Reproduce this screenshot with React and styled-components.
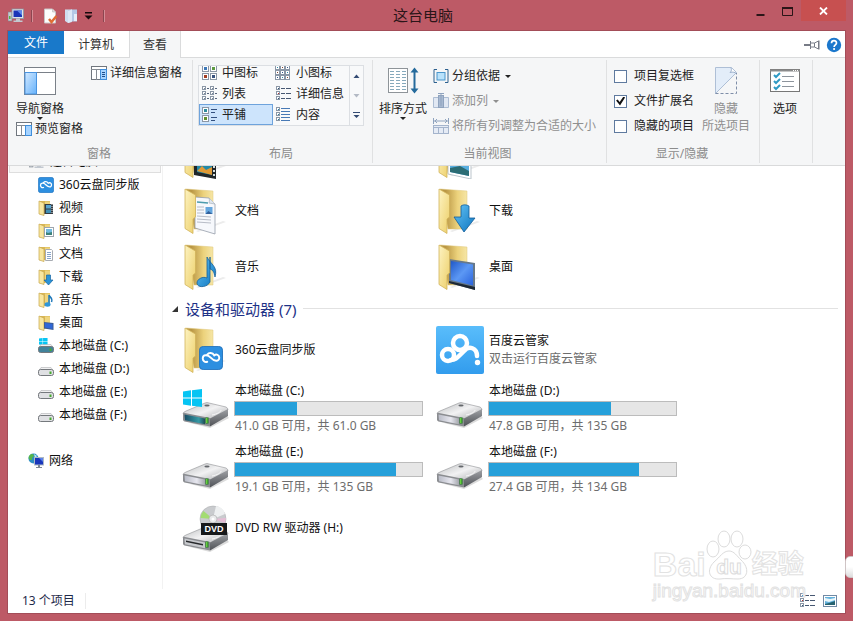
import React from "react";
import styled, { createGlobalStyle, css } from "styled-components";

const Global = createGlobalStyle`
  * { box-sizing: border-box; }
  body { margin: 0; background: #bd5a66; }
  body, button, input {
    font-family: "Noto Sans", "Noto Sans CJK SC", sans-serif;
    font-size: 12px;
    line-height: 16px;
    color: #111;
  }
  button { background: none; border: 0; padding: 0; }
  ul { list-style: none; margin: 0; padding: 0; }
  svg { display: block; flex: none; }
`;

/* ---------- window frame ---------- */

const Frame = styled.div`
  position: relative;
  display: flex;
  flex-direction: column;
  min-height: 100vh;
  padding: 0 8px 8px;
  background: #bd5a66;
  overflow: hidden;
`;

const TitleBar = styled.header`
  display: grid;
  grid-template-columns: 1fr auto 1fr;
  height: 31px;
  margin-right: -1px;
  margin-left: -8px;
`;

const QuickAccess = styled.div`
  display: flex;
  align-items: center;
  padding-left: 8px;
`;

const QuickButton = styled.button`
  display: flex;
  justify-content: center;
  width: ${(p) => p.$w || 21}px;
`;

const QuickLine = styled.span`
  width: 1px;
  height: 12px;
  margin: 0 7px;
  background: #8c4650;
  box-shadow: 1px 0 #d58d95;
`;

const Title = styled.h1`
  margin: 0;
  font-size: 15px;
  font-weight: 400;
  line-height: 31px;
  color: #2b1518;
`;

const WindowButtons = styled.div`
  display: flex;
  justify-content: flex-end;
  align-items: flex-start;
`;

const WindowButton = styled.button`
  display: flex;
  align-items: center;
  justify-content: center;
  width: ${(p) => (p.$close ? 45 : 27)}px;
  height: ${(p) => (p.$close ? 21 : 23)}px;
  background: ${(p) => (p.$close ? "#c75050" : "transparent")};
`;

const Client = styled.div`
  flex: 1;
  display: flex;
  flex-direction: column;
  background: #fff;
  box-shadow: 0 0 0 1px #a34d58;
`;

const EdgeHandle = styled.div`
  position: absolute;
  right: -8px;
  top: 556px;
  width: 16px;
  height: 22px;
  border-radius: 5px;
  background: linear-gradient(#fff 50%, #ddd);
  border: 1px solid #cfc4c5;
`;

/* ---------- tabs ---------- */

const TabBar = styled.div`
  display: flex;
  height: 27px;
  box-shadow: inset 0 -1px #dadbdc;
`;

const Tab = styled.button`
  padding: 0 15px 0 14px;
  height: 27px;
  color: #333;
  ${(p) => p.$file && css`
    height: 23px;
    padding: 0 16px;
    background: #1979ca;
    color: #fff;
  `}
  ${(p) => p.$active && css`
    background: #f5f6f7;
    border: 1px solid #dadbdc;
    border-width: 0 1px;
    padding: 0 13px;
  `}
`;

const TabTools = styled.div`
  display: flex;
  align-items: center;
  gap: 6px;
  margin-left: auto;
  padding-right: 3px;
`;

/* ---------- ribbon ---------- */

const Ribbon = styled.div`
  display: flex;
  height: 108px;
  background: #f5f6f7;
  border-bottom: 1px solid #d9dadb;
  padding: 2px 0;
`;

const Group = styled.section`
  display: flex;
  flex-direction: column;
  justify-content: space-between;
  flex: none;
  padding: 5px ${(p) => p.$right || 9}px 1px ${(p) => p.$left || 8}px;
  border-right: 1px solid #e0e1e2;
`;

const GroupBody = styled.div`
  display: flex;
  align-items: flex-start;
  gap: ${(p) => p.$gap || 0}px;
`;

const GroupName = styled.div`
  text-align: center;
  color: #8c8c8c;
`;

const Stack = styled.div`
  display: flex;
  flex-direction: column;
  align-items: flex-start;
  gap: ${(p) => p.$gap || 0}px;
  padding-top: ${(p) => p.$top || 0}px;
`;

const Command = styled.button`
  display: flex;
  align-items: center;
  gap: 3px;
  white-space: nowrap;
  color: ${(p) => (p.disabled ? "#8f8f8f" : "#222")};
`;

const BigCommand = styled.button`
  display: flex;
  flex-direction: column;
  align-items: center;
  min-width: ${(p) => p.$min || 48}px;
  padding-top: 1px;
  color: ${(p) => (p.disabled ? "#8f8f8f" : "#222")};
  white-space: nowrap;
  & > svg:first-child { margin-bottom: 5px; }
  & > span + span { padding-top: 1px; }
`;

const Caret = styled.i`
  width: 0;
  height: 0;
  margin-left: ${(p) => (p.$inline ? 2 : 0)}px;
  border: 3px solid transparent;
  border-top-color: currentColor;
  border-bottom-width: 0;
`;

const Gallery = styled.div`
  display: flex;
  height: 61px;
  border: 1px solid #dcdfe3;
  background: #f8f9fa;
`;

const GalleryGrid = styled.div`
  display: grid;
  grid-template-columns: 74px 76px;
  grid-auto-rows: 21px;
  align-content: end;
  overflow: hidden;
`;

const GalleryItem = styled.button`
  display: flex;
  align-items: center;
  gap: 5px;
  padding-left: 2px;
  white-space: nowrap;
  color: #222;
  ${(p) => p.$on && css`
    background: #cde4fc;
    box-shadow: inset 0 0 0 1px #6ea3dc;
  `}
`;

const GalleryScroll = styled.div`
  display: grid;
  grid-template-rows: repeat(3, 1fr);
  width: 14px;
  border-left: 1px solid #dcdfe3;
  button { display: grid; place-items: center; }
`;

const CheckLabel = styled.label`
  display: flex;
  align-items: center;
  gap: 7px;
  color: #222;
`;

const CheckBox = styled.input`
  appearance: none;
  display: grid;
  place-items: center;
  width: 13px;
  height: 13px;
  margin: 0;
  background: #fff;
  border: 1px solid #5f7a9f;
  &:checked::after {
    content: "";
    width: 9px;
    height: 9px;
    background: #111;
    clip-path: polygon(0 45%, 18% 32%, 40% 60%, 82% 0, 100% 12%, 44% 100%);
  }
`;

/* ---------- body ---------- */

const Body = styled.div`
  flex: 1;
  display: flex;
  overflow: hidden;
`;

const Sidebar = styled.nav`
  flex: none;
  width: 155px;
  border-right: 1px solid #f2f2f2;
  & > ul { margin-top: -16px; }
  & > ul + ul { margin-top: 23px; }
`;

const SideLink = styled.a`
  display: flex;
  align-items: center;
  gap: 5px;
  height: 23px;
  margin: 0 1px;
  padding-left: ${(p) => (p.$root ? 19 : 29)}px;
  color: #111;
  text-decoration: none;
  ${(p) => p.$selected && css`
    background: #f7f7f7;
    border: 1px solid #dedede;
  `}
`;

const Content = styled.main`
  flex: 1;
  padding: 0 7px 0 9px;
`;

const TileGrid = styled.ul`
  display: grid;
  grid-template-columns: repeat(auto-fill, 254px);
  padding-left: 10px;
  margin-top: ${(p) => (p.$scrolled ? -39 : 0)}px;
`;

const Tile = styled.li`
  display: flex;
  align-items: center;
  gap: 4px;
  height: ${(p) => (p.$drive ? 61 : 56)}px;
  padding-right: 13px;
`;

const TileText = styled.div`
  flex: 1;
  display: flex;
  flex-direction: column;
  gap: 2px;
`;

const TileName = styled.span`
  padding-left: 1px;
`;

const TileNote = styled.span`
  padding-left: 1px;
  color: #6d6d6d;
`;

const Meter = styled.div`
  height: 15px;
  border: 1px solid #bcbcbc;
  background: #e6e6e6;
`;

const MeterFill = styled.div`
  height: 100%;
  background: #26a0da;
`;

const SectionHead = styled.h2`
  display: flex;
  align-items: center;
  gap: 7px;
  height: 27px;
  margin: 0;
  font-size: 15px;
  line-height: 20px;
  font-weight: 400;
  color: #1e3287;
  &::after {
    content: "";
    flex: 1;
    height: 1px;
    background: #e2e2e2;
  }
`;

const StatusBar = styled.footer`
  display: flex;
  align-items: center;
  gap: 7px;
  height: 24px;
  padding: 0 7px 0 14px;
  color: #1e2a4a;
`;

const StatusCount = styled.span`
  padding-right: 10px;
  margin-right: auto;
  border-right: 1px solid #ececec;
`;

/* ---------- watermark ---------- */

const Watermark = styled.div`
  position: absolute;
  right: 47px;
  bottom: 19px;
  color: #fff;
  -webkit-text-stroke: 1px #e2e2e2;
  font-family: "Liberation Sans", "Noto Sans CJK SC", sans-serif;
`;

const MarkRow = styled.div`
  display: flex;
  align-items: flex-end;
  font-size: 34px;
  line-height: 32px;
  font-weight: 700;
`;

const MarkCjk = styled.span`
  font-size: 26px;
`;

const MarkUrl = styled.div`
  font-size: 19px;
  line-height: 22px;
`;

/* ---------- icons ---------- */

const Svg = ({ w = 16, h = w, children }) => (
  <svg width={w} height={h} viewBox={`0 0 ${w} ${h}`} aria-hidden="true">{children}</svg>
);

const PcIcon = () => (
  <Svg>
    <rect x="0" y="4" width="4" height="9" fill="#c8ccd2" stroke="#7b828c" strokeWidth=".6" />
    <rect x="1" y="8" width="1.500" height="3" fill="#59b443" />
    <rect x="4" y="1" width="11.500" height="9.500" fill="#dfe4ea" stroke="#8b93a0" strokeWidth=".8" />
    <rect x="5.500" y="2.500" width="8.500" height="6.500" fill="#1a35b8" />
    <path d="M9 2.500h5v5z" fill="#5c86ea" />
    <path d="M8 10.500h4v2h2.500v1.500h-9v-1.500H8z" fill="#c2c8d0" />
  </Svg>
);

const PropertiesIcon = () => (
  <Svg>
    <path d="M2.500 1h8l3 3v11h-11z" fill="#fdfdfd" stroke="#c9c4c6" />
    <path d="M10.500 1v3h3" fill="#ddd" stroke="#bbb" strokeWidth=".6" />
    <path d="M7 11l2.500 3 5-6" fill="none" stroke="#df6d35" strokeWidth="2.500" />
  </Svg>
);

const NewFolderIcon = () => (
  <Svg>
    <path d="M2 1.500h7V14l-4 1-3-2z" fill="#cfdef0" />
    <path d="M5 2.500l4-1h5v12H5z" fill="#b4c9e6" />
    <path d="M5 3v12l4-1.500V1.500z" fill="#dde9f7" />
    <rect x="11" y="6" width="3" height="7" fill="#e6eef8" />
  </Svg>
);

const PaneIcon = ({ side }) => (
  <Svg>
    <rect x=".5" y="1.500" width="15" height="13" fill="#fff" stroke="#70767e" />
    <path d="M0 4.500h16M5.500 4.500V15" stroke="#858b93" />
    <rect x="9.500" y="4.500" width="6" height="10" fill="#a6d3ff" stroke="#3f8edb" />
    {side === "details" && <path d="M11 7.500h3M11 9.500h3M11 11.500h3" stroke="#1f4f8c" />}
  </Svg>
);

const NavPaneIcon = () => (
  <Svg w={32} h={30}>
    <defs>
      <linearGradient id="pane" x2="1" y2="1">
        <stop stopColor="#d3e9ff" /><stop offset="1" stopColor="#66b2fb" />
      </linearGradient>
    </defs>
    <rect x=".5" y="1.500" width="31" height="27" fill="#fff" stroke="#7a8088" />
    <path d="M1 6.500h30" stroke="#7a8088" />
    <rect x="1" y="6.500" width="11.500" height="21.500" fill="url(#pane)" stroke="#4a94e0" />
  </Svg>
);

const cell = (x, y, s, c) => (
  <g key={`${x}-${y}`}>
    <rect x={x + 0.5} y={y + 0.5} width={s} height={s} fill="#fff" stroke="#8b97a6" />
    <rect x={x + 2} y={y + 2} width={Math.max(1, s - 3)} height={Math.max(1, s - 3)} fill={c} />
  </g>
);

const ViewIcon = ({ kind }) => (
  <Svg>
    {kind === "medium" && [cell(1, 0, 6, "#3d78b8"), cell(9, 0, 6, "#5d9a42"), cell(1, 8, 6, "#a33d22"), cell(9, 8, 6, "#38527e")]}
    {kind === "small" && [0, 5, 10].flatMap((x, i) => [0, 5, 10].map((y, j) => cell(x, y, 4, ["#2f8aa8", "#8a4b35", "#345890"][(i + j) % 3])))}
    {kind === "list" && [0, 5, 10].flatMap((y) => [cell(1, y, 3, "#789"), cell(9, y, 3, "#789")])}
    {kind === "list" && <path d="M6 2.500h2M6 7.500h2M6 12.500h2M14 2.500h2M14 7.500h2M14 12.500h2" stroke="#56657c" />}
    {kind === "details" && [0, 5, 10].map((y) => cell(1, y, 3, y === 5 ? "#b33" : "#357"))}
    {kind === "details" && <path d="M6 2.500h4M11 2.500h5M6 7.500h4M11 7.500h5M6 12.500h4M11 12.500h5" stroke="#475872" />}
    {kind === "tiles" && [cell(1, 0, 6, "#2d8c9e"), cell(1, 8, 6, "#5f8f2f")]}
    {kind === "tiles" && <path d="M10 2.500h6M10 5.500h4M10 10.500h6M10 13.500h4" stroke="#33507f" />}
    {kind === "content" && [0, 5, 10].map((y) => cell(1, y, 3, "#2d7f9e"))}
    {kind === "content" && <path d="M6 1.500h9M6 4.500h9M6 7.500h9M6 10.500h9M6 13.500h9" stroke="#4779b5" />}
  </Svg>
);

const ArrowIcon = ({ kind }) => (
  <Svg w={7} h={8}>
    {kind === "up" && <path d="M.5 6l3-3.500 3 3.500z" fill="#344b73" />}
    {kind === "down" && <path d="M.5 3l3 3.500 3-3.500z" fill="#b4bac5" />}
    {kind === "more" && <path d="M0 1h7v1H0zM.5 4l3 3 3-3z" fill="#344b73" />}
  </Svg>
);

const SortIcon = () => (
  <Svg w={32} h={30}>
    <rect x="1.500" y="2.500" width="19" height="24" fill="#fff" stroke="#8e9499" />
    {[6, 9, 12, 15, 18, 21, 24].map((y) => (
      <path key={y} d={`M3 ${y - 0.5}h16`} stroke="#86a9bc" strokeDasharray="4 2" />
    ))}
    <path d="M27.500 4v21" stroke="#246a9c" strokeWidth="2" />
    <path d="M23.500 6.500l4-5 4 5zM23.500 22.500l4 5 4-5z" fill="#246a9c" />
  </Svg>
);

const GroupByIcon = () => (
  <Svg>
    <path d="M4 1.500H1v13h3M12 1.500h3v13h-3" fill="none" stroke="#2c608e" />
    <rect x="4" y="4.500" width="8" height="7.500" fill="#b9e2fb" stroke="#4b96cb" />
  </Svg>
);

const AddColumnIcon = () => (
  <Svg>
    <path d="M.5 4.500h5v10h-5zM10.500 4.500h5v10h-5z" fill="#e1e8f3" stroke="#adbdd3" />
    <rect x="5.500" y="2.500" width="5" height="12" fill="#a7b8d0" stroke="#8fa3be" />
    <path d="M5 .5h6M8 0v13" stroke="#8fa3be" />
  </Svg>
);

const FitColumnsIcon = () => (
  <Svg>
    <path d="M.5 0v6M15.500 0v6M1 3h14M4 1L2 3l2 2M12 1l2 2-2 2" fill="none" stroke="#8fa3be" />
    <rect x=".5" y="7.500" width="15" height="8" fill="#e5ebf5" stroke="#a4b4cc" />
    <path d="M0 9.500h16M5.500 9v7M10.500 9v7" stroke="#a4b4cc" />
  </Svg>
);

const HideIcon = () => (
  <Svg w={24} h={30}>
    <path d="M1.500 1.500h16l5 5-21 21z" fill="#e3edf9" stroke="#aebfd6" />
    <path d="M17 1.500c1 3 0 4-1 5 3-1 5 0 6.500 1" fill="#fff" stroke="#9db1cc" />
    <path d="M1.500 27.500h21V7" fill="none" stroke="#7e8ea8" strokeDasharray="3 2" />
  </Svg>
);

const OptionsIcon = () => (
  <Svg w={32} h={30}>
    <rect x="1.500" y="3.500" width="29" height="22" fill="#fff" stroke="#777" />
    <path d="M1 3.500h30v2H1z" fill="#8b8b8b" />
    <path d="M24 4.500h5" stroke="#fff" strokeDasharray="1 1" />
    <path d="M5 9l2 2 4-4M5 15l2 2 4-4M5 21l2 2 4-4" fill="none" stroke="#2f9ac4" strokeWidth="2" />
    <path d="M13 10.500h12M13 15.500h12M13 20.500h12" stroke="#8d949c" />
  </Svg>
);

const PinIcon = () => (
  <Svg>
    <path d="M0 7.500h6M0 8.500h6M6.500 4v8M6.500 6h4M6.500 10h4M10.500 6l4-2v8l-4-2zM15 3.500v9" fill="none" stroke="#777b86" />
  </Svg>
);

const HelpIcon = () => (
  <Svg>
    <circle cx="8" cy="8" r="7.200" fill="#1b77cc" />
    <path d="M5.500 6.200c0-3.400 5-3.200 5-.3 0 1.900-2.400 1.900-2.400 4" fill="none" stroke="#fff" strokeWidth="1.700" />
    <circle cx="8.100" cy="12" r="1.100" fill="#fff" />
  </Svg>
);

const CloudMark = ({ x = 0, y = 0, s = 16 }) => (
  <svg x={x} y={y} width={s} height={s} viewBox="0 0 16 16" aria-hidden="true">
    <rect x=".3" y=".3" width="15.400" height="15.400" rx="2.500" fill="#2d8fe0" stroke="#1f6fba" strokeWidth=".6" />
    <path d="M2.500 8.300c0-2.600 3.200-2.800 5.300-.5s5.700 3 5.700 0c0-2-2-2.600-3.300-1.500M5.500 10.500c-1.700.6-3-.8-3-2.200M10.200 6.300C9 4.200 6.500 4.400 5.500 5.700" fill="none" stroke="#fff" strokeWidth="1.300" strokeLinecap="round" />
  </svg>
);

const SmallFolder = ({ kind }) => (
  <Svg>
    <path d="M2 1h10v13H2z" fill="#d9b755" />
    <path d="M7 1.500h5V14H7z" fill="#efd57e" />
    <path d="M1 1l5 2v12.500L1 14z" fill="#f8e6a0" stroke="#c7a64c" strokeWidth=".7" />
    {kind === "video" && <g><rect x="6.500" y="4" width="8.500" height="10" fill="#333c45" /><rect x="8" y="5" width="5" height="3.500" fill="#58a5d0" /><rect x="8" y="9.500" width="5" height="3.500" fill="#418fb5" /><path d="M14 4v10" stroke="#ddd" strokeDasharray="1 1" /></g>}
    {kind === "picture" && <g><rect x="6.500" y="4.500" width="9" height="9" fill="#fff" stroke="#9da5ad" /><rect x="8" y="6" width="6" height="6" fill="#73bbe0" /><path d="M8 12v-3l2 1 4-1v3z" fill="#3c8179" /></g>}
    {kind === "doc" && <g><path d="M7.500 3.500h6l1 1v10h-7z" fill="#fff" stroke="#a8acb2" /><path d="M9 6.500h4M9 8.500h4M9 10.500h4M9 12.500h4" stroke="#87a4cb" /></g>}
    {kind === "download" && <path d="M8.500 6h4v5H15l-4.500 5L6 11h2.500z" fill="#2b93d6" stroke="#1766a4" strokeWidth=".7" />}
    {kind === "music" && <g><path d="M11 3v9M11 3c1 2.500 4 3 2.500 7" fill="none" stroke="#1e78ba" strokeWidth="1.500" /><ellipse cx="9.500" cy="12.500" rx="3" ry="2.200" fill="#2e96d9" /></g>}
    {kind === "desktop" && <g><path d="M6 7l9.500 1v7L6 13.500z" fill="#3d5d95" /><path d="M7 8l7.500 1v5L7 12.500z" fill="#2f67d7" /></g>}
  </Svg>
);

const WinLogo = ({ x, y, s }) => (
  <svg x={x} y={y} width={s} height={s} viewBox="0 0 20 18" aria-hidden="true">
    <path d="M0 2.500L8 1.300V8.500H0zM9 1.200L19 0v8.500H9zM0 9.500h8v7.200L0 15.500zM9 9.500h10V18L9 16.800z" fill="#06c4f3" />
  </svg>
);

const SmallDrive = ({ win }) => (
  <Svg>
    {win && <WinLogo x={1} y={-1} s={9} />}
    <path d="M3 6.500h10l2.500 4H.5z" fill="#f0f0f1" stroke="#aeb0b3" strokeWidth=".6" />
    <rect x=".5" y="8.500" width="15" height="6" rx="2" fill={win ? "#41829b" : "#dfe0e3"} stroke="#75797d" />
    <rect x="11.500" y="10.500" width="2" height="2.500" fill="#47a92f" />
  </Svg>
);

const NetworkIcon = () => (
  <Svg>
    <circle cx="5.500" cy="5.500" r="5" fill="#2d8fc4" />
    <path d="M3 1c3 0 4 2 2 3s0 3-2 3-3-2-2-4z" fill="#55b54b" />
    <path d="M6 1l3 2-2 2z" fill="#bfe9f4" />
    <rect x="6.500" y="4.500" width="9" height="7.500" fill="#1936bb" stroke="#aeb8c4" />
    <path d="M11 5h4v4z" fill="#5b82ea" />
    <path d="M10 12h2v2h2v1H8v-1h2z" fill="#7d8792" />
  </Svg>
);

const TileFolder = ({ kind }) => (
  <Svg w={48}>
    <defs>
      <linearGradient id="fFront" x2="1" y2="1">
        <stop stopColor="#fdf3c2" /><stop offset="1" stopColor="#edcf68" />
      </linearGradient>
      <linearGradient id="fBack" x2="1">
        <stop offset=".2" stopColor="#b99644" /><stop offset=".65" stopColor="#ecd27c" /><stop offset="1" stopColor="#f6e6a6" />
      </linearGradient>
      <linearGradient id="blueArrow" x2="1" y2="1">
        <stop stopColor="#65c4f5" /><stop offset="1" stopColor="#0c74bf" />
      </linearGradient>
      <linearGradient id="screen" x2="1" y2="1">
        <stop stopColor="#2058c8" /><stop offset=".5" stopColor="#5c98f4" /><stop offset="1" stopColor="#2a63dc" />
      </linearGradient>
    </defs>
    <path d="M14 44l27-10 3 1-28 10z" fill="#ececec" />
    <path d="M4 2l27 2v38H12z" fill="url(#fBack)" stroke="#dfc778" strokeWidth=".5" />
    {kind === "doc" && <g><path d="M13 10l14 1 6 6v30L13 41z" fill="#f6f8fc" stroke="#959daa" strokeWidth=".8" /><path d="M27 11c1 3 0 4 0 5l6 1" fill="#dfe7ef" stroke="#9ba6b4" strokeWidth=".6" /><path d="M15 15l11 1" stroke="#4d9cad" strokeWidth="1.500" /><path d="M15 20h7M15 23h7M15 26h7M15 29l14 1M15 32l14 1M15 35l14 1" stroke="#b7bcc7" /><rect x="23.500" y="20" width="7" height="7" fill="#64a6de" /><path d="M23.500 27l3-3 4 3z" fill="#315f9b" /></g>}
    {kind === "music" && <g><path d="M28 14v25c-3 6-13 6-13 1 0-4 6-7 10-5V14c4 8 11 9 8 20-1-5-2-7-5-8z" fill="url(#blueArrow)" stroke="#175f98" strokeWidth=".8" /></g>}
    {kind === "download" && <path d="M25 19c3-2 6-1 8 0v12h6L28 45 18 30h7z" fill="url(#blueArrow)" stroke="#125c98" strokeWidth=".8" />}
    {kind === "desktop" && <g><path d="M13 16l26 4v27L13 40z" fill="#66788a" /><path d="M15 18l22 3.500v21L15 37z" fill="url(#screen)" /><path d="M13 38l26 6v3L13 40z" fill="#1d2835" /></g>}
    {kind === "video" && <g><path d="M12 22l22 3v23l-22-4z" fill="#202629" /><path d="M15 27l15 2v15l-15-3z" fill="#2189a8" /><path d="M15 40l5-5 4 4 6-3v8z" fill="#df9a35" /><path d="M32 27v19" stroke="#d5dfdf" strokeWidth="2" strokeDasharray="2 2" /></g>}
    {kind === "picture" && <g><path d="M12 20l23 4v24l-23-5z" fill="#fff" stroke="#bcc5cc" /><path d="M14 23l19 3v19l-19-4z" fill="#58aee0" /><path d="M14 37l10-2 9 5v5l-19-4z" fill="#2b6c74" /></g>}
    <path d="M3 2l10.500 6v22L11 32v14.500L3 41.500z" fill="url(#fFront)" stroke="#d2b45a" strokeWidth=".8" />
    {kind === "cloud" && <CloudMark x={17} y={20} s={24} />}
  </Svg>
);

const TileDrive = ({ kind }) => (
  <Svg w={48}>
    <defs>
      <linearGradient id="dTop" x2="1" y2="1">
        <stop stopColor="#b9bbbd" /><stop offset=".5" stopColor="#f2f2f3" /><stop offset="1" stopColor="#a5a7aa" />
      </linearGradient>
      <linearGradient id="dSide" y2="1" x2="0">
        <stop stopColor="#9fa1a5" /><stop offset="1" stopColor="#4f5257" />
      </linearGradient>
      <linearGradient id="dFront" x2="1">
        <stop stopColor="#b9bcc7" /><stop offset=".6" stopColor="#e7e7ef" /><stop offset="1" stopColor="#a4a6ad" />
      </linearGradient>
      <linearGradient id="dWin" x2="1">
        <stop stopColor="#194e66" /><stop offset=".7" stopColor="#369aa5" /><stop offset="1" stopColor="#204a55" />
      </linearGradient>
    </defs>
    <g transform={kind === "dvd" ? "translate(0 5)" : undefined}>
      <path d="M8 38l20 5 19-10-3-3z" fill="#dcdcdc" />
      <path d="M1 29q0-2 3-3l19-8q2-1 4 0l17 4q2 1 2 3L28 35z" fill="url(#dTop)" stroke="#909295" strokeWidth=".6" />
      <path d="M27 34l19-10v7L28 41.500z" fill="url(#dSide)" />
      <path d="M1 28.500q0-1 2-.6L28 33v8.500L2.500 36.500Q1 36 1 34.500z" fill="#8b8d91" />
      <path d="M2.500 29.500L23 33.500v5.800l-20-4z" fill={kind === "win" ? "url(#dWin)" : kind === "dvd" ? "#c7c9cd" : "url(#dFront)"} />
      {kind === "dvd" && <path d="M4 31.500l17 3.500v1.500L4 33z" fill="#26282b" />}
      <ellipse cx="25" cy="20.500" rx="2.600" ry="1" fill="#64676b" />
      <path d="M30 30c5-1 9-3 9-5" fill="none" stroke="#fff" opacity=".8" />
      <rect x="23.500" y="32.500" width="3" height="6" fill="#1f7b20" />
      <rect x="24.200" y="33" width="1.200" height="5" fill="#7ae34a" />
    </g>
    {kind === "win" && <WinLogo x={1} y={3} s={20} />}
    {kind === "dvd" && (
      <g>
        <circle cx="31" cy="15" r="13" fill="#c9cbce" stroke="#a6a8aa" strokeWidth=".5" />
        <path d="M31 15L18.500 14q0-4 3-7z" fill="#a3dc72" />
        <path d="M31 15l3-13q7 1 9 8z" fill="#eef0f1" />
        <path d="M31 15l13-1-1 5z" fill="#e5bdd5" />
        <circle cx="31" cy="15" r="4" fill="#e9eaeb" stroke="#aaa" strokeWidth=".6" />
        <circle cx="31" cy="15" r="1.500" fill="#fff" />
        <rect x="19" y="19" width="26" height="12" fill="#17191b" />
        <text x="32" y="28" textAnchor="middle" fontFamily="Liberation Sans, sans-serif" fontSize="9" fontWeight="700" fill="#fff">DVD</text>
      </g>
    )}
  </Svg>
);

const BaiduCloudIcon = () => (
  <Svg w={48}>
    <defs>
      <linearGradient id="bd" x2="0" y2="1">
        <stop stopColor="#59bdfb" /><stop offset="1" stopColor="#329ced" />
      </linearGradient>
    </defs>
    <rect width="48" height="48" rx="2" fill="url(#bd)" />
    <g fill="none" stroke="#fff" strokeWidth="4.500">
      <circle cx="12" cy="29" r="6" />
      <circle cx="24" cy="17" r="7" />
      <path d="M15 34c4 0 6-2 9-5l4-4c5-6 13-3 13 5" strokeLinecap="round" />
    </g>
    <circle cx="41.500" cy="36.500" r="2.700" fill="#fff" />
  </Svg>
);

const PreviewIcon = () => (
  <Svg>
    <rect x="1.500" y="2.500" width="13" height="11" fill="#fff" stroke="#718aa5" />
    <rect x="3" y="4" width="10" height="8" fill="#64b2dd" />
    <path d="M3 11l4-1 6-2v4H3z" fill="#266370" />
    <path d="M3 5l5 1 5-1v2l-6 2-4-1z" fill="#e8f6fb" />
  </Svg>
);

const Paw = () => (
  <svg width="46" height="50" viewBox="0 0 46 50" aria-hidden="true">
    <g fill="#fff" stroke="#dcdcdc">
      <ellipse cx="7" cy="19" rx="6" ry="8" />
      <ellipse cx="18" cy="9" rx="6" ry="8" />
      <ellipse cx="31" cy="9" rx="6" ry="8" />
      <ellipse cx="39" cy="22" rx="6" ry="7" />
      <path d="M23 21c5 0 8 5 12 9 9 8 7 19-3 19-5 0-13-1-18 0C3 50 0 40 8 32c6-5 9-11 15-11z" />
    </g>
    <text x="23" y="44" textAnchor="middle" fontFamily="Liberation Sans, sans-serif" fontSize="21" fontWeight="700" fill="#fff" stroke="#dcdcdc" strokeWidth="1">du</text>
  </svg>
);

/* ---------- data ---------- */

const layouts = [
  ["medium", "中图标"],
  ["small", "小图标"],
  ["list", "列表"],
  ["details", "详细信息"],
  ["tiles", "平铺"],
  ["content", "内容"],
];

const sideItems = [
  ["360云盘同步版", <CloudMark />],
  ["视频", <SmallFolder kind="video" />],
  ["图片", <SmallFolder kind="picture" />],
  ["文档", <SmallFolder kind="doc" />],
  ["下载", <SmallFolder kind="download" />],
  ["音乐", <SmallFolder kind="music" />],
  ["桌面", <SmallFolder kind="desktop" />],
  ["本地磁盘 (C:)", <SmallDrive win />],
  ["本地磁盘 (D:)", <SmallDrive />],
  ["本地磁盘 (E:)", <SmallDrive />],
  ["本地磁盘 (F:)", <SmallDrive />],
];

const folders = [
  [null, "video"],
  [null, "picture"],
  ["文档", "doc"],
  ["下载", "download"],
  ["音乐", "music"],
  ["桌面", "desktop"],
];

const drives = [
  { name: "本地磁盘 (C:)", used: 33, note: "41.0 GB 可用，共 61.0 GB", kind: "win" },
  { name: "本地磁盘 (D:)", used: 65, note: "47.8 GB 可用，共 135 GB" },
  { name: "本地磁盘 (E:)", used: 86, note: "19.1 GB 可用，共 135 GB" },
  { name: "本地磁盘 (F:)", used: 80, note: "27.4 GB 可用，共 134 GB" },
];

const DriveTile = ({ name, used, note, kind }) => (
  <Tile $drive>
    <TileDrive kind={kind} />
    <TileText>
      <TileName>{name}</TileName>
      <Meter role="meter" aria-label={name} aria-valuemin={0} aria-valuemax={100} aria-valuenow={used}>
        <MeterFill style={{ width: `${used}%` }} />
      </Meter>
      <TileNote>{note}</TileNote>
    </TileText>
  </Tile>
);

const Check = ({ children, checked }) => (
  <CheckLabel>
    <CheckBox type="checkbox" defaultChecked={checked} />
    {children}
  </CheckLabel>
);

export default function App() {
  return (
    <Frame>
      <Global />
      <TitleBar>
        <QuickAccess>
          <PcIcon />
          <QuickLine />
          <QuickButton aria-label="属性"><PropertiesIcon /></QuickButton>
          <QuickButton aria-label="新建文件夹"><NewFolderIcon /></QuickButton>
          <QuickButton aria-label="自定义快速访问工具栏" $w={15}>
            <Svg w={9} h={8}><path d="M1 0h7v1.500H1zM.5 3.500h8l-4 4z" fill="#160a0c" /></Svg>
          </QuickButton>
          <QuickLine />
        </QuickAccess>
        <Title>这台电脑</Title>
        <WindowButtons>
          <WindowButton aria-label="最小化">
            <Svg w={9} h={10}><path d="M.5 7h8v2h-8z" fill="#2b1518" /></Svg>
          </WindowButton>
          <WindowButton aria-label="最大化">
            <Svg w={11} h={9}><path d="M.5 1.500h10v7H.5z" fill="none" stroke="#2b1518" /><path d="M0 1h11" stroke="#2b1518" strokeWidth="2" /></Svg>
          </WindowButton>
          <WindowButton $close aria-label="关闭">
            <Svg w={9} h={8}><path d="M1 .5l7 7M8 .5l-7 7" stroke="#fff" strokeWidth="1.800" /></Svg>
          </WindowButton>
        </WindowButtons>
      </TitleBar>

      <Client>
        <TabBar>
          <Tab $file>文件</Tab>
          <Tab>计算机</Tab>
          <Tab $active>查看</Tab>
          <TabTools>
            <PinIcon />
            <HelpIcon />
          </TabTools>
        </TabBar>

        <Ribbon>
          <Group $right={10}>
            <GroupBody $gap={8}>
              <Stack $gap={1}>
                <BigCommand $min={46}>
                  <NavPaneIcon />
                  导航窗格
                  <Caret />
                </BigCommand>
                <Command><PaneIcon side="preview" />预览窗格</Command>
              </Stack>
              <Command><PaneIcon side="details" />详细信息窗格</Command>
            </GroupBody>
            <GroupName>窗格</GroupName>
          </Group>

          <Group $left={5} $right={8}>
            <Gallery>
              <GalleryGrid>
                {layouts.map(([kind, label]) => (
                  <GalleryItem key={kind} $on={kind === "tiles"}>
                    <ViewIcon kind={kind} />
                    {label}
                  </GalleryItem>
                ))}
              </GalleryGrid>
              <GalleryScroll>
                <button aria-label="向上"><ArrowIcon kind="up" /></button>
                <button aria-label="向下"><ArrowIcon kind="down" /></button>
                <button aria-label="更多"><ArrowIcon kind="more" /></button>
              </GalleryScroll>
            </Gallery>
            <GroupName>布局</GroupName>
          </Group>

          <Group $left={6} $right={10}>
            <GroupBody $gap={6}>
              <BigCommand>
                <SortIcon />
                排序方式
                <Caret />
              </BigCommand>
              <Stack $gap={9} $top={3}>
                <Command><GroupByIcon />分组依据<Caret $inline /></Command>
                <Command disabled><AddColumnIcon />添加列<Caret $inline /></Command>
                <Command disabled><FitColumnsIcon />将所有列调整为合适的大小</Command>
              </Stack>
            </GroupBody>
            <GroupName>当前视图</GroupName>
          </Group>

          <Group $left={7}>
            <GroupBody $gap={8}>
              <Stack $gap={9} $top={3}>
                <Check>项目复选框</Check>
                <Check checked>文件扩展名</Check>
                <Check>隐藏的项目</Check>
              </Stack>
              <BigCommand disabled>
                <HideIcon />
                <span>隐藏</span>
                <span>所选项目</span>
              </BigCommand>
            </GroupBody>
            <GroupName>显示/隐藏</GroupName>
          </Group>

          <Group $left={9} $right={11}>
            <BigCommand $min={32}>
              <OptionsIcon />
              选项
            </BigCommand>
          </Group>
        </Ribbon>

        <Body>
          <Sidebar>
            <ul>
              <li><SideLink href="#pc" $root $selected><PcIcon />这台电脑</SideLink></li>
              {sideItems.map(([label, icon]) => (
                <li key={label}><SideLink href="#item">{icon}{label}</SideLink></li>
              ))}
            </ul>
            <ul>
              <li><SideLink href="#network" $root><NetworkIcon />网络</SideLink></li>
            </ul>
          </Sidebar>

          <Content>
            <TileGrid $scrolled>
              {folders.map(([label, kind]) => (
                <Tile key={kind}>
                  <TileFolder kind={kind} />
                  {label && <TileName>{label}</TileName>}
                </Tile>
              ))}
            </TileGrid>
            <SectionHead>
              <Svg w={6} h={6}><path d="M6 0v6H0z" fill="#333" /></Svg>
              设备和驱动器 (7)
            </SectionHead>
            <TileGrid>
              <Tile>
                <TileFolder kind="cloud" />
                <TileName>360云盘同步版</TileName>
              </Tile>
              <Tile>
                <BaiduCloudIcon />
                <TileText>
                  <TileName>百度云管家</TileName>
                  <TileNote>双击运行百度云管家</TileNote>
                </TileText>
              </Tile>
              {drives.map((d) => <DriveTile key={d.name} {...d} />)}
              <Tile>
                <TileDrive kind="dvd" />
                <TileName>DVD RW 驱动器 (H:)</TileName>
              </Tile>
            </TileGrid>
          </Content>
        </Body>

        <StatusBar>
          <StatusCount>13 个项目</StatusCount>
          <ViewIcon kind="details" />
          <PreviewIcon />
        </StatusBar>
      </Client>

      <Watermark aria-hidden="true">
        <MarkRow>
          Bai<Paw /><MarkCjk>经验</MarkCjk>
        </MarkRow>
        <MarkUrl>jingyan.baidu.com</MarkUrl>
      </Watermark>
      <EdgeHandle />
    </Frame>
  );
}
